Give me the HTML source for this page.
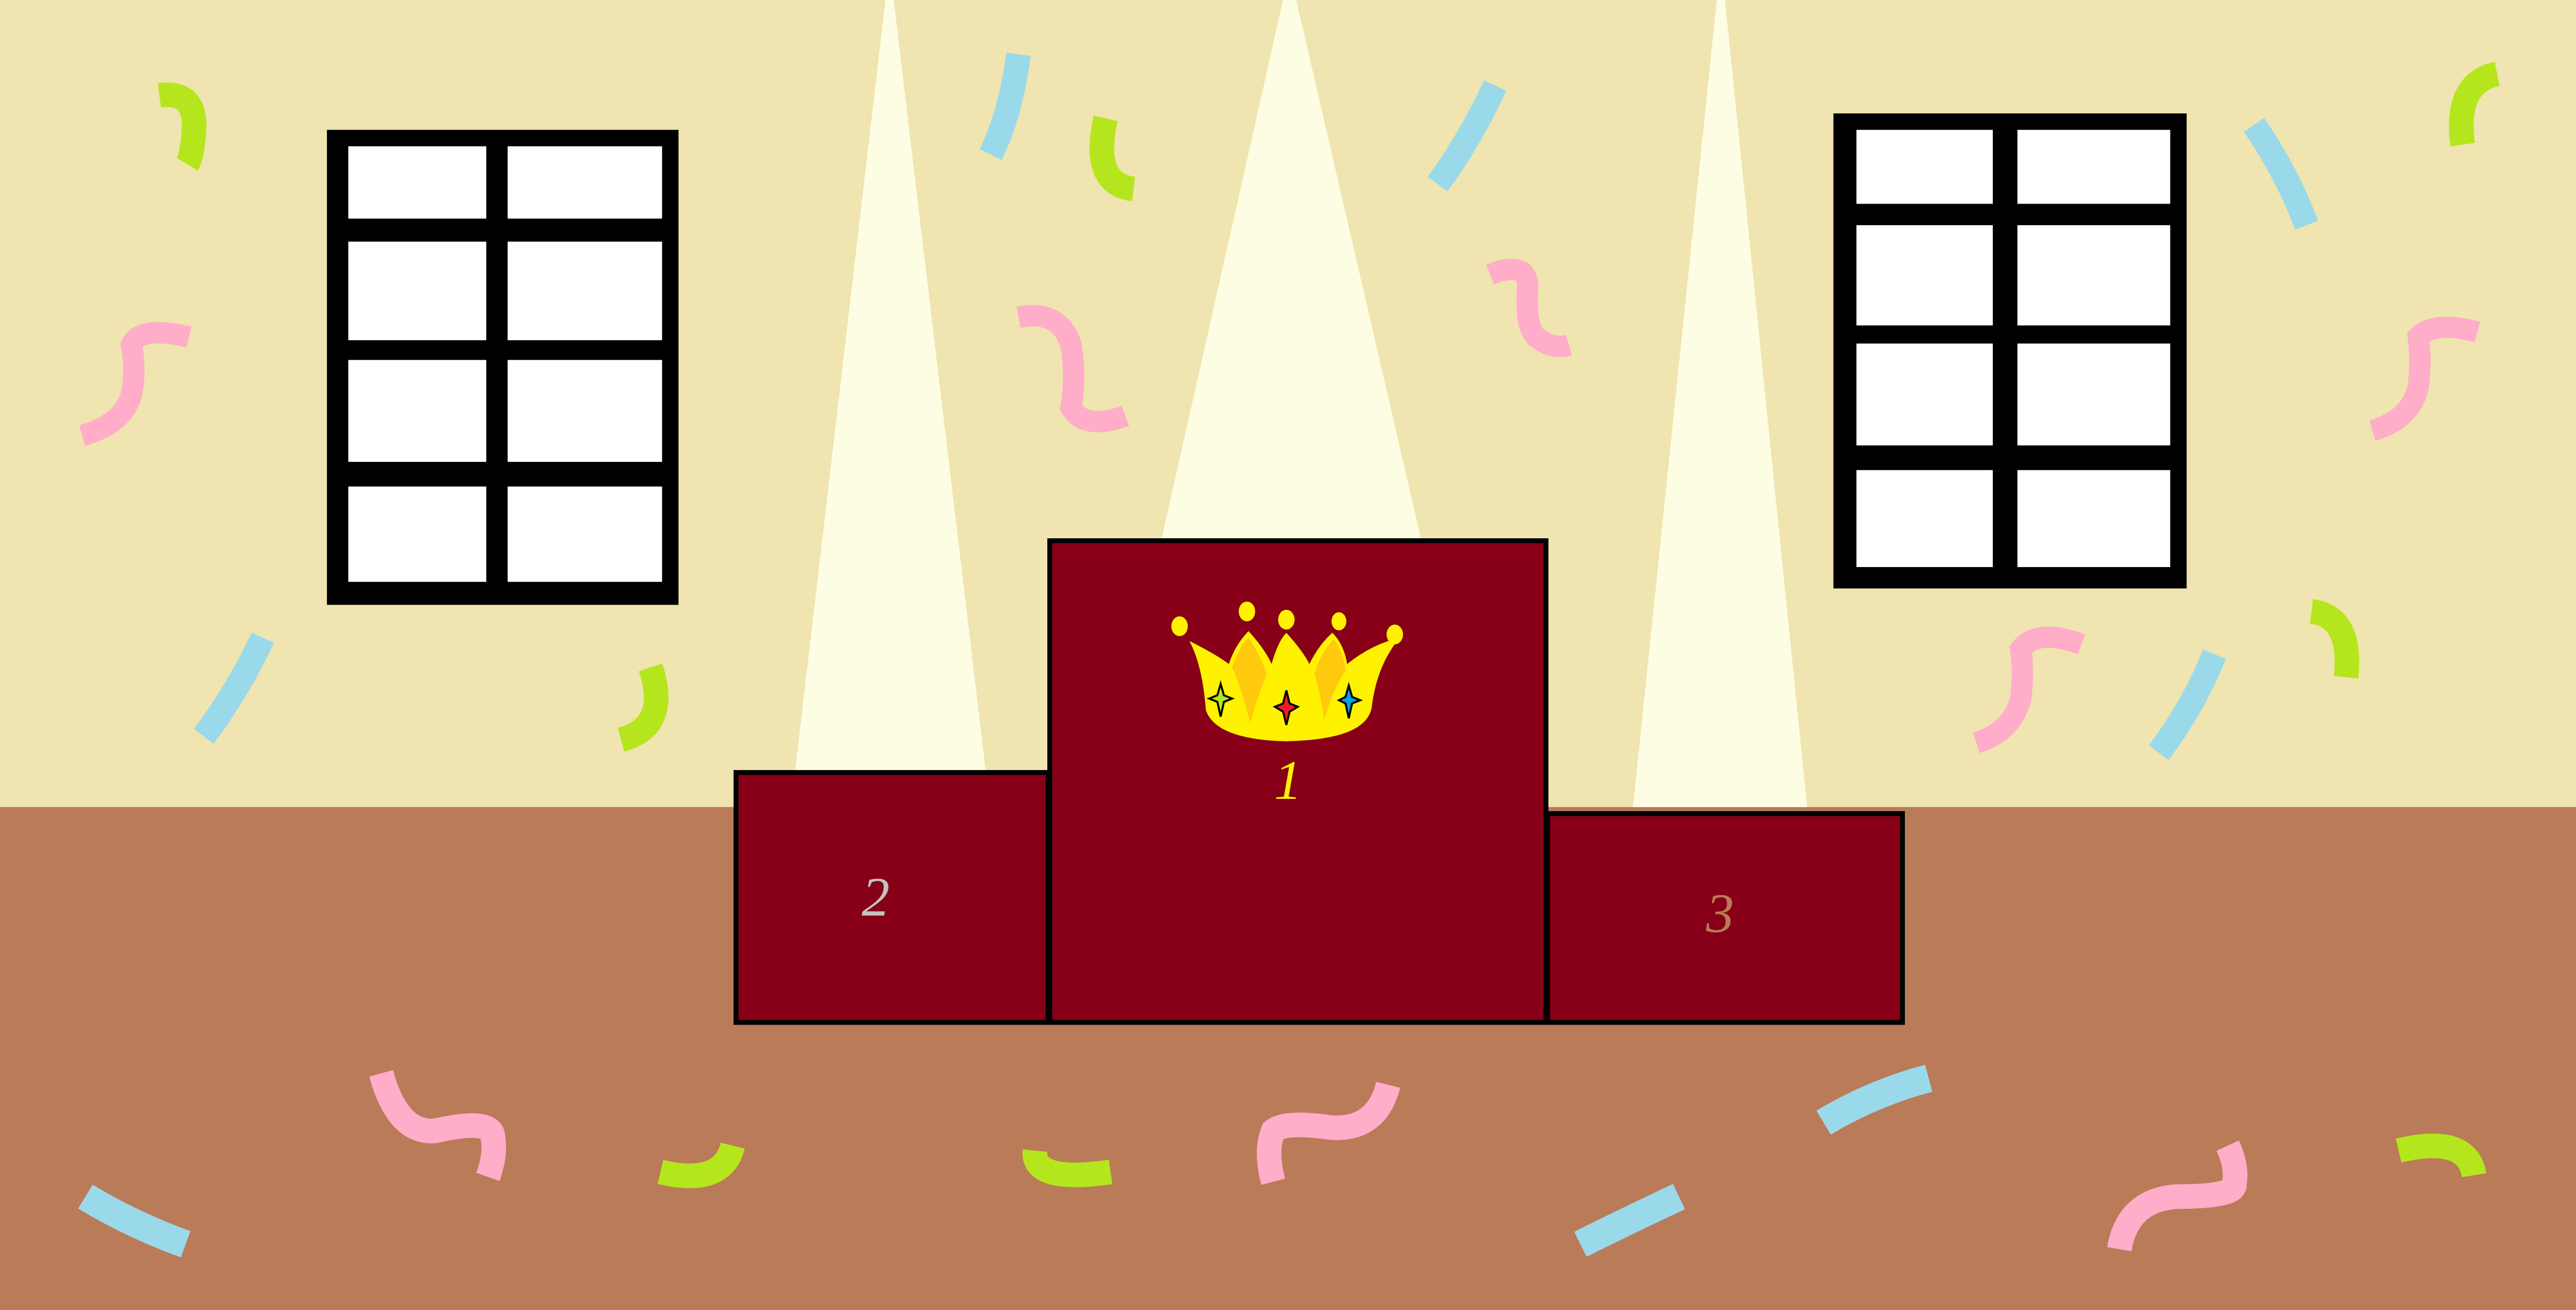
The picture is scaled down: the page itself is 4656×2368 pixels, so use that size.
<!DOCTYPE html>
<html><head><meta charset="utf-8"><style>
html,body{margin:0;padding:0;width:4656px;height:2368px;overflow:hidden;background:#F0E4B0}
svg{display:block}
</style></head><body>
<svg width="4656" height="2368" viewBox="0 0 1568 797" preserveAspectRatio="none" xmlns="http://www.w3.org/2000/svg">
<rect x="0" y="0" width="1568" height="491" fill="#F0E4B0"/>
<rect x="0" y="491" width="1568" height="306" fill="#B97B58"/>
<rect x="199" y="79" width="214" height="289" fill="#000"/>
<g fill="#fff">
<rect x="212" y="89" width="84" height="44"/><rect x="309" y="89" width="94" height="44"/>
<rect x="212" y="147" width="84" height="60"/><rect x="309" y="147" width="94" height="60"/>
<rect x="212" y="219" width="84" height="62"/><rect x="309" y="219" width="94" height="62"/>
<rect x="212" y="296" width="84" height="58"/><rect x="309" y="296" width="94" height="58"/>
</g>
<rect x="1116" y="69" width="215" height="289" fill="#000"/>
<g fill="#fff">
<rect x="1130" y="79" width="83" height="45"/><rect x="1228" y="79" width="93" height="45"/>
<rect x="1130" y="137" width="83" height="61"/><rect x="1228" y="137" width="93" height="61"/>
<rect x="1130" y="209" width="83" height="62"/><rect x="1228" y="209" width="93" height="62"/>
<rect x="1130" y="286" width="83" height="59"/><rect x="1228" y="286" width="93" height="59"/>
</g>
<g fill="#FDFDE3">
<polygon points="539,0 544,0 600,469 484,469"/>
<polygon points="781,0 789,0 865,328 707,328"/>
<polygon points="1045,0 1050,0 1100,491 994,491"/>
</g>
<g fill="#870017" stroke="#000" stroke-width="3">
<rect x="448" y="470" width="190" height="152"/>
<rect x="639" y="329" width="302" height="293"/>
<rect x="942" y="495" width="216" height="127"/>
</g>
<g>
<path d="M724,390 Q740,398 748,404 Q752,392 760,384 Q770,395 774,404 Q778,390 783,385 Q793,396 797,404 Q803,392 811,385 Q818,392 820,404 Q835,392 852,388 Q838,405 835,430 Q832,450 783,451 Q740,450 734,432 Q732,405 724,390 Z" fill="#FFF200"/>
<path d="M750,406 Q755,392 760,388 Q767,398 771,410 Q765,425 761,440 Q756,420 750,406 Z" fill="#FFC90E"/>
<path d="M800,410 Q805,395 812,389 Q818,398 819,408 Q812,418 806,438 Q804,422 800,410 Z" fill="#FFC90E"/>
<g fill="#FFF200">
<ellipse cx="718" cy="381" rx="5" ry="6"/><ellipse cx="759" cy="372" rx="5" ry="6"/>
<ellipse cx="783" cy="377" rx="5" ry="6"/><ellipse cx="815" cy="378" rx="4.5" ry="5.5"/>
<ellipse cx="849" cy="386" rx="5" ry="6"/>
</g>
<g stroke="#000" stroke-width="1.2">
<path d="M743,416 L745,423 L750,425 L745,427 L743,436 L741,427 L736,425 L741,423 Z" fill="#B5E61D"/>
<path d="M783,420 L785,428 L790,430 L785,433 L783,441 L781,433 L776,430 L781,428 Z" fill="#ED1C24"/>
<path d="M821,417 L823,424 L828,426 L823,428 L821,437 L819,428 L815,426 L819,424 Z" fill="#00A2E8"/>
</g>
</g>
<g font-family="Liberation Serif, serif" font-style="italic" font-size="34" text-anchor="middle">
<text x="784" y="486" fill="#FFF200">1</text>
<text x="533" y="557" fill="#C3C3C3">2</text>
<text x="1047" y="567" fill="#B97B58">3</text>
</g>
<g fill="none" stroke="#9AD9EA" stroke-width="15">
<path d="M603,94 Q615,70 620,33"/>
<path d="M875,112 Q895,85 910,52"/>
<path d="M124,448 Q145,420 160,388"/>
<path d="M1372,76 Q1392,105 1404,137"/>
<path d="M1314,458 Q1335,430 1348,398"/>
<path d="M52,728 Q80,745 113,757" stroke-width="17"/>
<path d="M1110,683 Q1140,665 1174,656" stroke-width="17"/>
<path d="M962,757 Q990,743 1022,728" stroke-width="17"/>
</g>
<g fill="none" stroke="#FFADC9" stroke-width="13">
<path d="M50,265 Q75,258 80,240 Q83,225 80,210 Q85,198 115,205"/>
<path d="M620,193 Q645,188 652,210 Q655,230 652,248 Q660,262 685,253"/>
<path d="M907,167 Q930,158 930,175 Q928,198 935,205 Q945,213 955,210"/>
<path d="M1203,452 Q1225,445 1230,425 Q1232,410 1230,395 Q1240,382 1267,392"/>
<path d="M1444,262 Q1468,255 1472,235 Q1474,220 1472,205 Q1482,195 1508,202"/>
<path d="M232,653 Q242,690 265,688 Q300,680 300,692 Q302,702 297,716" stroke-width="15"/>
<path d="M775,719 Q770,700 775,688 Q782,682 810,686 Q838,688 845,660" stroke-width="15"/>
<path d="M1290,760 Q1295,730 1325,728 Q1362,728 1360,720 Q1362,710 1356,697" stroke-width="15"/>
</g>
<g fill="none" stroke="#B5E61D" stroke-width="15">
<path d="M97,58 Q120,55 118,80 Q117,95 114,100"/>
<path d="M673,72 Q664,112 690,115"/>
<path d="M396,406 Q408,442 378,450"/>
<path d="M1520,45 Q1494,50 1499,88"/>
<path d="M1407,372 Q1432,375 1428,412"/>
<path d="M402,713 Q440,722 446,697"/>
<path d="M630,700 Q628,720 676,713"/>
<path d="M1460,700 Q1502,690 1506,715"/>
</g>
</svg>
</body></html>
